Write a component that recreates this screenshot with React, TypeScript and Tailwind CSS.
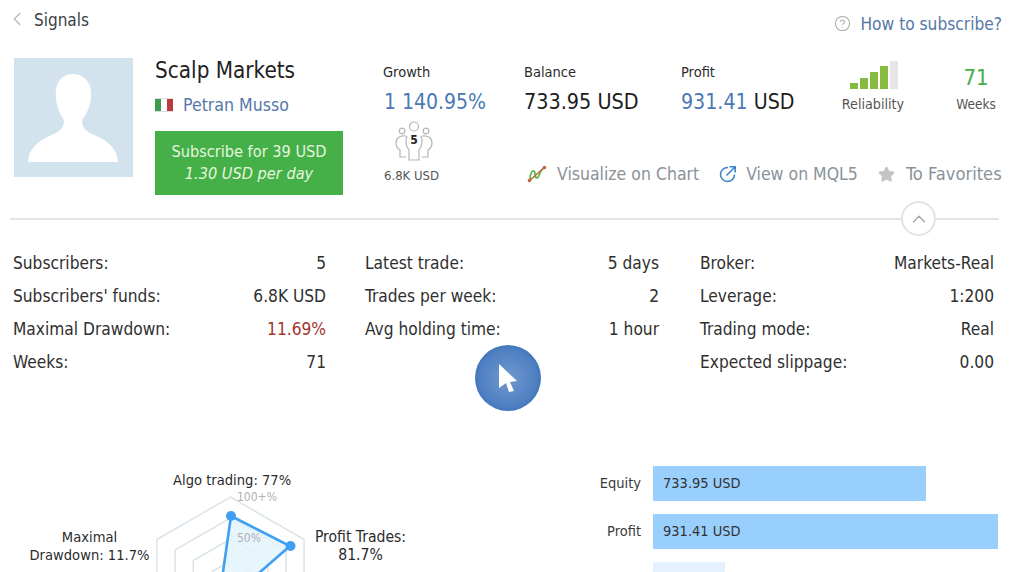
import { ChevronLeft, ChevronUp, CircleHelp, Star } from "lucide-react";

const columns = [
  {
    className: "w-[313px]",
    rows: [
      ["Subscribers:", "5"],
      ["Subscribers' funds:", "6.8K USD"],
      ["Maximal Drawdown:", "11.69%"],
      ["Weeks:", "71"],
    ],
  },
  {
    className: "w-[294px] ml-[39px]",
    rows: [
      ["Latest trade:", "5 days"],
      ["Trades per week:", "2"],
      ["Avg holding time:", "1 hour"],
    ],
  },
  {
    className: "w-[294px] ml-[41px]",
    rows: [
      ["Broker:", "Markets-Real"],
      ["Leverage:", "1:200"],
      ["Trading mode:", "Real"],
      ["Expected slippage:", "0.00"],
    ],
  },
];

const Avatar = () => (
  <div className="w-[119px] h-[119px] bg-[#d3e3ed] shrink-0">
    <svg viewBox="0 0 119 119" className="w-full h-full">
      <path
        fill="#fff"
        d="M59 16C46 16 41 27 42 38C42 46 45 56 50 62C50 68 48 72 40 76C28 81 15 88 14 104L104 104C103 88 90 81 78 76C70 72 68 68 68 62C73 56 77 46 77 38C78 27 72 16 59 16Z"
      />
    </svg>
  </div>
);

const PeopleIcon = () => (
  <div className="relative w-[38px] h-[40px]">
    <svg viewBox="0 0 38 40" className="w-full h-full" fill="none" stroke="#b5b5b5" strokeWidth="1.2">
      <circle cx="19" cy="5.5" r="4.5" />
      <circle cx="7" cy="10" r="2.8" />
      <circle cx="31" cy="10" r="2.8" />
      <path d="M11 15C5 14 1 17 1 22C1 26 3 28 5 29L5 36L11 36" />
      <path d="M27 15C33 14 37 17 37 22C37 26 35 28 33 29L33 36L27 36" />
      <path d="M12 15C10 20 11 26 14 29L14 39L24 39L24 29C27 26 28 20 26 15" />
    </svg>
    <span className="absolute left-0 right-0 top-[12px] text-center text-[12px] leading-[14px] font-bold text-[#222]">5</span>
  </div>
);

const ChartIcon = () => (
  <svg width="20" height="18" viewBox="0 0 20 18" fill="none">
    <path d="M3 15C3 9 5 5 7 6C9 7 7 13 10 13C13 13 12 5 17 3" stroke="#59b548" strokeWidth="1.6" />
    <path d="M2 16L18 2" stroke="#c0663f" strokeWidth="1.6" />
    <circle cx="2.5" cy="15.5" r="1.8" fill="#c0663f" />
    <circle cx="17.5" cy="2.5" r="1.8" fill="#c0663f" />
  </svg>
);

const LinkIcon = () => (
  <svg width="18" height="18" viewBox="0 0 18 18" fill="none" stroke="#3f83c9" strokeWidth="1.6">
    <path d="M9 2.5A7 7 0 1 0 15.5 9.5" />
    <path d="M7.5 10.5L15.5 2.5M10.5 1.8L16.2 1.8L16.2 7.5" />
  </svg>
);

const Radar = () => {
  const cx = 230.5;
  const cy = 582;
  const hex = (r: number) =>
    [0, 60, 120, 180, 240, 300]
      .map((a) => {
        const t = (a * Math.PI) / 180;
        return `${cx + r * Math.sin(t)},${cy - r * Math.cos(t)}`;
      })
      .join(" ");
  return (
    <svg viewBox="0 0 480 106" className="absolute left-0 top-0 w-[480px] h-[106px]">
      <g transform="translate(0,-466)">
        {[85, 64, 43, 21].map((r) => (
          <polygon key={r} points={hex(r)} fill="none" stroke="#dbe4ea" strokeWidth="1.5" />
        ))}
        <polygon points="231,516 290,546 228,600 219,600" fill="#e3f3fd" fillOpacity="0.85" stroke="#3f9ff0" strokeWidth="2.6" />
        <circle cx="231" cy="516" r="5" fill="#3f9ff0" />
        <circle cx="290.5" cy="546" r="5" fill="#3f9ff0" />
      </g>
    </svg>
  );
};

export default function App() {
  return (
    <div className="relative w-[1024px] h-[572px] overflow-hidden bg-white font-['DejaVu_Sans_Condensed','DejaVu_Sans',sans-serif] text-[#2b2b2b]">
      <header className="flex justify-between h-[58px] pl-[6px] pr-[22px]">
        <div className="flex items-start pt-[10px]">
          <ChevronLeft size={22} strokeWidth={1.3} className="text-[#b5b5b5] mt-[-2px]" />
          <span className="ml-[6px] text-[17px] leading-[20px] text-[#3a3f47]">Signals</span>
        </div>
        <div className="flex items-start pt-[14px]">
          <CircleHelp size={17} strokeWidth={1.5} className="text-[#a9a9a9] mt-[1px]" />
          <a className="ml-[9px] text-[17.2px] leading-[20px] text-[#5578a8]">How to subscribe?</a>
        </div>
      </header>

      <section className="flex h-[160px] pl-[14px]">
        <Avatar />
        <div className="ml-[22px] w-[188px] shrink-0">
          <h1 className="text-[22.3px] leading-[24px] text-[#222]">Scalp Markets</h1>
          <div className="flex items-center mt-[12px] h-[22px]">
            <span className="flex w-[18px] h-[14px] border-y border-[#ddd]">
              <i className="flex-1 bg-[#3f9a4f]" />
              <i className="flex-1 bg-white" />
              <i className="flex-1 bg-[#bf3b3b]" />
            </span>
            <a className="ml-[10px] text-[17.6px] text-[#5578a8]">Petran Musso</a>
          </div>
          <button className="mt-[15px] w-[188px] h-[64px] bg-[#45b048] text-[#e4f6df] text-[16.2px] leading-[22px]">
            Subscribe for 39 USD
            <br />
            <em>1.30 USD per day</em>
          </button>
        </div>

        <div className="ml-[40px] flex-1 min-w-0">
          <div className="flex h-[66px]">
            <div className="w-[141px]">
              <div className="text-[14.5px] leading-[18px] mt-[5px]">Growth</div>
              <div className="text-[21px] leading-[26px] mt-[8px] ml-[1px] text-[#4a78b5]">1 140.95%</div>
            </div>
            <div className="w-[157px]">
              <div className="text-[14.5px] leading-[18px] mt-[5px]">Balance</div>
              <div className="text-[21.4px] leading-[26px] mt-[8px] text-[#1c1c1c]">733.95 USD</div>
            </div>
            <div className="w-[150px]">
              <div className="text-[14.5px] leading-[18px] mt-[5px]">Profit</div>
              <div className="text-[21.2px] leading-[26px] mt-[8px] text-[#1c1c1c]">
                <span className="text-[#4a78b5]">931.41</span> USD
              </div>
            </div>
            <div className="w-[84px] flex flex-col items-center">
              <div className="flex items-end gap-[2px] h-[29px] mt-[2px] ml-[2px]">
                <i className="w-[8px] h-[6px] bg-[#86bb3f]" />
                <i className="w-[8px] h-[11px] bg-[#86bb3f]" />
                <i className="w-[8px] h-[17px] bg-[#86bb3f]" />
                <i className="w-[8px] h-[23px] bg-[#86bb3f]" />
                <i className="w-[8px] h-[28px] bg-[#e6e6e6]" />
              </div>
              <div className="text-[14.2px] leading-[18px] mt-[6px] text-[#555]">Reliability</div>
            </div>
            <div className="w-[72px] flex flex-col items-center ml-[25px]">
              <div className="text-[22px] leading-[26px] mt-[7px] text-[#45ad4a]">71</div>
              <div className="text-[13.5px] leading-[18px] mt-[4px] text-[#555]">Weeks</div>
            </div>
          </div>
          <div className="flex mt-[-3px]">
            <div className="w-[141px] pl-[1px]">
              <div className="ml-[11px]">
                <PeopleIcon />
              </div>
              <div className="text-[13px] leading-[16px] mt-[7px] text-[#555]">6.8K USD</div>
            </div>
            <div className="flex items-center h-[24px] mt-[41px] text-[17.5px] text-[#8a929a]">
              <span className="ml-[3px]"><ChartIcon /></span>
              <span className="ml-[10px]">Visualize on Chart</span>
              <span className="ml-[20px]"><LinkIcon /></span>
              <span className="ml-[9px]">View on MQL5</span>
              <Star size={17} fill="#c4c4c4" stroke="#c4c4c4" className="ml-[20px]" />
              <span className="ml-[11px] text-[18.2px]">To Favorites</span>
            </div>
          </div>
        </div>
      </section>

      <div className="relative h-[2px] ml-[10px] w-[989px] bg-[#e4e4e4]">
        <div className="absolute left-[891px] top-[-17px] w-[35px] h-[35px] rounded-full border-2 border-[#e4e4e4] bg-white flex items-center justify-center">
          <ChevronUp size={22} strokeWidth={1.6} className="text-[#a8a8a8]" />
        </div>
      </div>

      <section className="flex pl-[13px] pt-[27px] h-[246px]">
        {columns.map((col) => (
          <div key={col.rows[0][0]} className={col.className}>
            {col.rows.map(([label, value]) => (
              <div key={label} className="flex justify-between h-[33px] text-[17.2px] leading-[33px] text-[#2f2f2f]">
                <span>{label}</span>
                <span className={value === "11.69%" ? "text-[#a5352d]" : ""}>{value}</span>
              </div>
            ))}
          </div>
        ))}
      </section>

      <section className="relative flex justify-end h-[106px]">
        <Radar />
        <div className="absolute left-[173px] top-[5px] text-[14.6px] leading-[18px]">Algo trading: 77%</div>
        <div className="absolute left-[237px] top-[23px] text-[12px] leading-[16px] text-[#b0b0b0]">100+%</div>
        <div className="absolute left-[237px] top-[64px] text-[12px] leading-[16px] text-[#b0b0b0]">50%</div>
        <div className="absolute left-[10px] w-[159px] top-[62px] text-center text-[14.6px] leading-[18px]">
          Maximal
          <br />
          Drawdown: 11.7%
        </div>
        <div className="absolute left-[300px] w-[121px] top-[62px] text-center text-[15.6px] leading-[18px]">
          Profit Trades:
          <br />
          81.7%
        </div>
        <div className="flex flex-col gap-[13px] w-[431px] mr-[13px]">
          <div className="flex items-center">
            <span className="w-[61px] text-right text-[14.5px] text-[#3a3a3a]">Equity</span>
            <div className="ml-[12px] w-[273px] h-[35px] bg-[#99cffd] pl-[10px] text-[14.5px] leading-[35px] text-[#333]">733.95 USD</div>
          </div>
          <div className="flex items-center">
            <span className="w-[61px] text-right text-[14.5px] text-[#3a3a3a]">Profit</span>
            <div className="ml-[12px] w-[345px] h-[35px] bg-[#99cffd] pl-[10px] text-[14.5px] leading-[35px] text-[#333]">931.41 USD</div>
          </div>
          <div className="ml-[73px] w-[72px] h-[35px] bg-[#e3f2fe]" />
        </div>
      </section>

      <div className="absolute left-[475px] top-[345px] w-[66px] h-[66px] rounded-full bg-[radial-gradient(circle,#7198cf_0%,#4f80c2_60%,#1f5ca8_100%)] flex items-center justify-center">
        <svg width="24" height="30" viewBox="0 0 24 30">
          <path fill="#fff" d="M3 1L21 18L14 19L18 28L13 29L10 20L3 25Z" />
        </svg>
      </div>
    </div>
  );
}
